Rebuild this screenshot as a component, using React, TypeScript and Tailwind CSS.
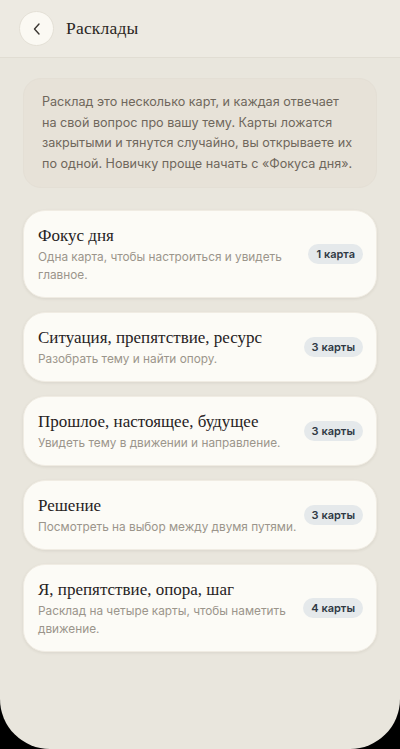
import React from "react";

const spreads = [
  { title: "Фокус дня", desc: "Одна карта, чтобы настроиться и увидеть главное.", badge: "1 карта" },
  { title: "Ситуация, препятствие, ресурс", desc: "Разобрать тему и найти опору.", badge: "3 карты" },
  { title: "Прошлое, настоящее, будущее", desc: "Увидеть тему в движении и направление.", badge: "3 карты" },
  { title: "Решение", desc: "Посмотреть на выбор между двумя путями.", badge: "3 карты" },
  { title: "Я, препятствие, опора, шаг", desc: "Расклад на четыре карты, чтобы наметить движение.", badge: "4 карты" },
];

export default function App() {
  return (
    <div className="w-[400px] h-[749px] bg-black overflow-hidden">
      <div className="h-[749px] rounded-b-[50px] bg-[#e9e6dd] flex flex-col overflow-hidden">
        <div className="h-[58px] shrink-0 bg-[#edeae2] border-b border-[#e1ddd3] flex items-center pl-[19px] gap-[12px]">
          <button className="w-[35px] h-[35px] rounded-full bg-[#fbf9f3] border border-[#e4e0d6] flex items-center justify-center">
            <svg width="10" height="14" viewBox="0 0 10 14" fill="none">
              <path d="M7 2 L2.5 7 L7 12" stroke="#3a3631" strokeWidth="1.4" strokeLinecap="round" strokeLinejoin="round" />
            </svg>
          </button>
          <div className="text-[17.5px] text-[#2a2622] font-['Liberation_Serif',serif] tracking-[0.2px]">Расклады</div>
        </div>

        <div className="px-[23px] pt-[20px] flex flex-col">
          <div className="rounded-[18px] bg-[#e7e2d8] border border-[#e4dfd5] pl-[18px] pr-[16px] py-[13px] text-[12.6px] leading-[20.5px] text-[#6f675c] font-['Inter',sans-serif]">
            Расклад это несколько карт, и каждая отвечает
            <br />
            на свой вопрос про вашу тему. Карты ложатся закрытыми и тянутся случайно, вы открываете их по одной. Новичку проще начать с «Фокуса дня».
          </div>

          <div className="mt-[22px] flex flex-col gap-[14px]">
            {spreads.map((s) => (
              <div
                key={s.title}
                className="rounded-[22px] bg-[#fcfbf6] pl-[14px] pr-[13px] py-[13px] flex items-center gap-[6px] shadow-[0_1px_3px_rgba(80,70,50,0.10)] border border-[#f0ece3]"
              >
                <div className="flex-1 min-w-0">
                  <div className="text-[17px] leading-[24px] text-[#26221e] font-['Liberation_Serif',serif]">{s.title}</div>
                  <div className="text-[11.8px] leading-[18px] text-[#9b958b] font-['Inter',sans-serif]">{s.desc}</div>
                </div>
                <div className="shrink-0 h-[20px] px-[8px] rounded-full bg-[#e5e9eb] flex items-center text-[11px] font-semibold text-[#2f3944] font-['Inter',sans-serif]">
                  {s.badge}
                </div>
              </div>
            ))}
          </div>
        </div>
      </div>
    </div>
  );
}
